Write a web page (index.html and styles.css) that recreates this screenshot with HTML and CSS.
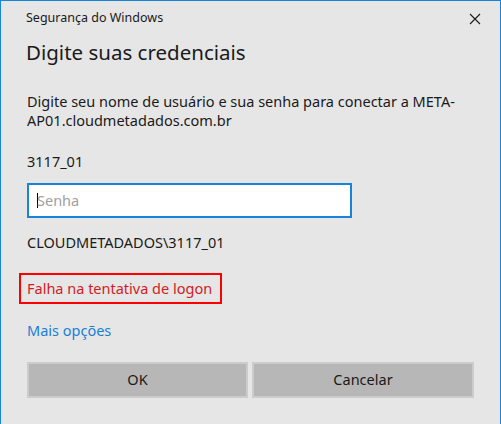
FILE: index.html
```html
<!DOCTYPE html>
<html lang="pt-BR">
<head>
<meta charset="utf-8">
<title>Segurança do Windows</title>
<link rel="stylesheet" href="styles.css">
</head>
<body>
<div class="dialog">
  <div class="titlebar">
    <span class="title">Segurança do Windows</span>
    <svg class="close" width="12" height="12" viewBox="0 0 12 12"><path d="M1 1 L11 11 M11 1 L1 11" stroke="#1a1a1a" stroke-width="1.1" fill="none"/></svg>
  </div>
  <div class="content">
    <h1 class="heading">Digite suas credenciais</h1>
    <p class="text para">Digite seu nome de usuário e sua senha para conectar a META-<br>AP01.cloudmetadados.com.br</p>
    <p class="text user">3117_01</p>
    <div class="input"><span class="caret"></span><span class="placeholder">Senha</span></div>
    <p class="text domain">CLOUDMETADADOS\3117_01</p>
    <div class="error"><span>Falha na tentativa de logon</span></div>
    <p class="text link">Mais opções</p>
    <div class="buttons">
      <div class="btn">OK</div>
      <div class="btn">Cancelar</div>
    </div>
  </div>
</div>
</body>
</html>
```
FILE: styles.css
```css
html, body {
  margin: 0;
  padding: 0;
  background: #e6e6e6;
}
body {
  font-family: "Noto Sans", "Open Sans", sans-serif;
  color: #1a1a1a;
}
.dialog {
  box-sizing: border-box;
  width: 501px;
  height: 424px;
  background: #e6e6e6;
  border: 1px solid #1883d7;
  border-bottom: none;
}
.titlebar {
  display: flex;
  justify-content: space-between;
  align-items: flex-start;
  padding: 9px 19px 0 25px;
  height: 26px;
  box-sizing: border-box;
}
.title {
  font-size: 12.5px;
  line-height: 16px;
}
.close {
  margin-top: 3px;
}
.content {
  padding: 0 26px 0 26px;
  display: flex;
  flex-direction: column;
  align-items: flex-start;
}
.heading {
  margin: 10px 0 0 -1px;
  font-size: 20.5px;
  line-height: 30px;
  font-weight: 400;
}
.text {
  margin: 0;
  font-size: 14.5px;
  line-height: 19px;
}
.para { margin-top: 25px; }
.user { margin-top: 22px; }
.input {
  box-sizing: border-box;
  margin-top: 12px;
  width: 325px;
  height: 35px;
  background: #fff;
  border: 2px solid #1883d7;
  padding: 0 0 0 8px;
  display: flex;
  align-items: center;
  font-size: 14.5px;
}
.caret {
  display: inline-block;
  width: 1px;
  height: 15px;
  background: #000;
  margin-right: -1px;
}
.placeholder {
  color: #a0a0a0;
  line-height: 19px;
}
.domain { margin-top: 15px; }
.error {
  box-sizing: border-box;
  margin-top: 21px;
  margin-left: -8px;
  width: 203px;
  height: 31px;
  border: 2px solid #ff0000;
  padding: 4px 0 0 6px;
  font-size: 14.5px;
  line-height: 19px;
  color: #d01c24;
}
.link {
  margin-top: 17px;
  color: #1a7fd4;
}
.buttons {
  margin-top: 22px;
  display: grid;
  grid-template-columns: 221px 222px;
  column-gap: 4px;
  width: 100%;
}
.btn {
  box-sizing: border-box;
  height: 36px;
  background: #b7b7b7;
  border: 2px solid #cccccc;
  text-align: center;
  font-size: 14.5px;
  line-height: 30px;
  color: #1a1a1a;
}
```
